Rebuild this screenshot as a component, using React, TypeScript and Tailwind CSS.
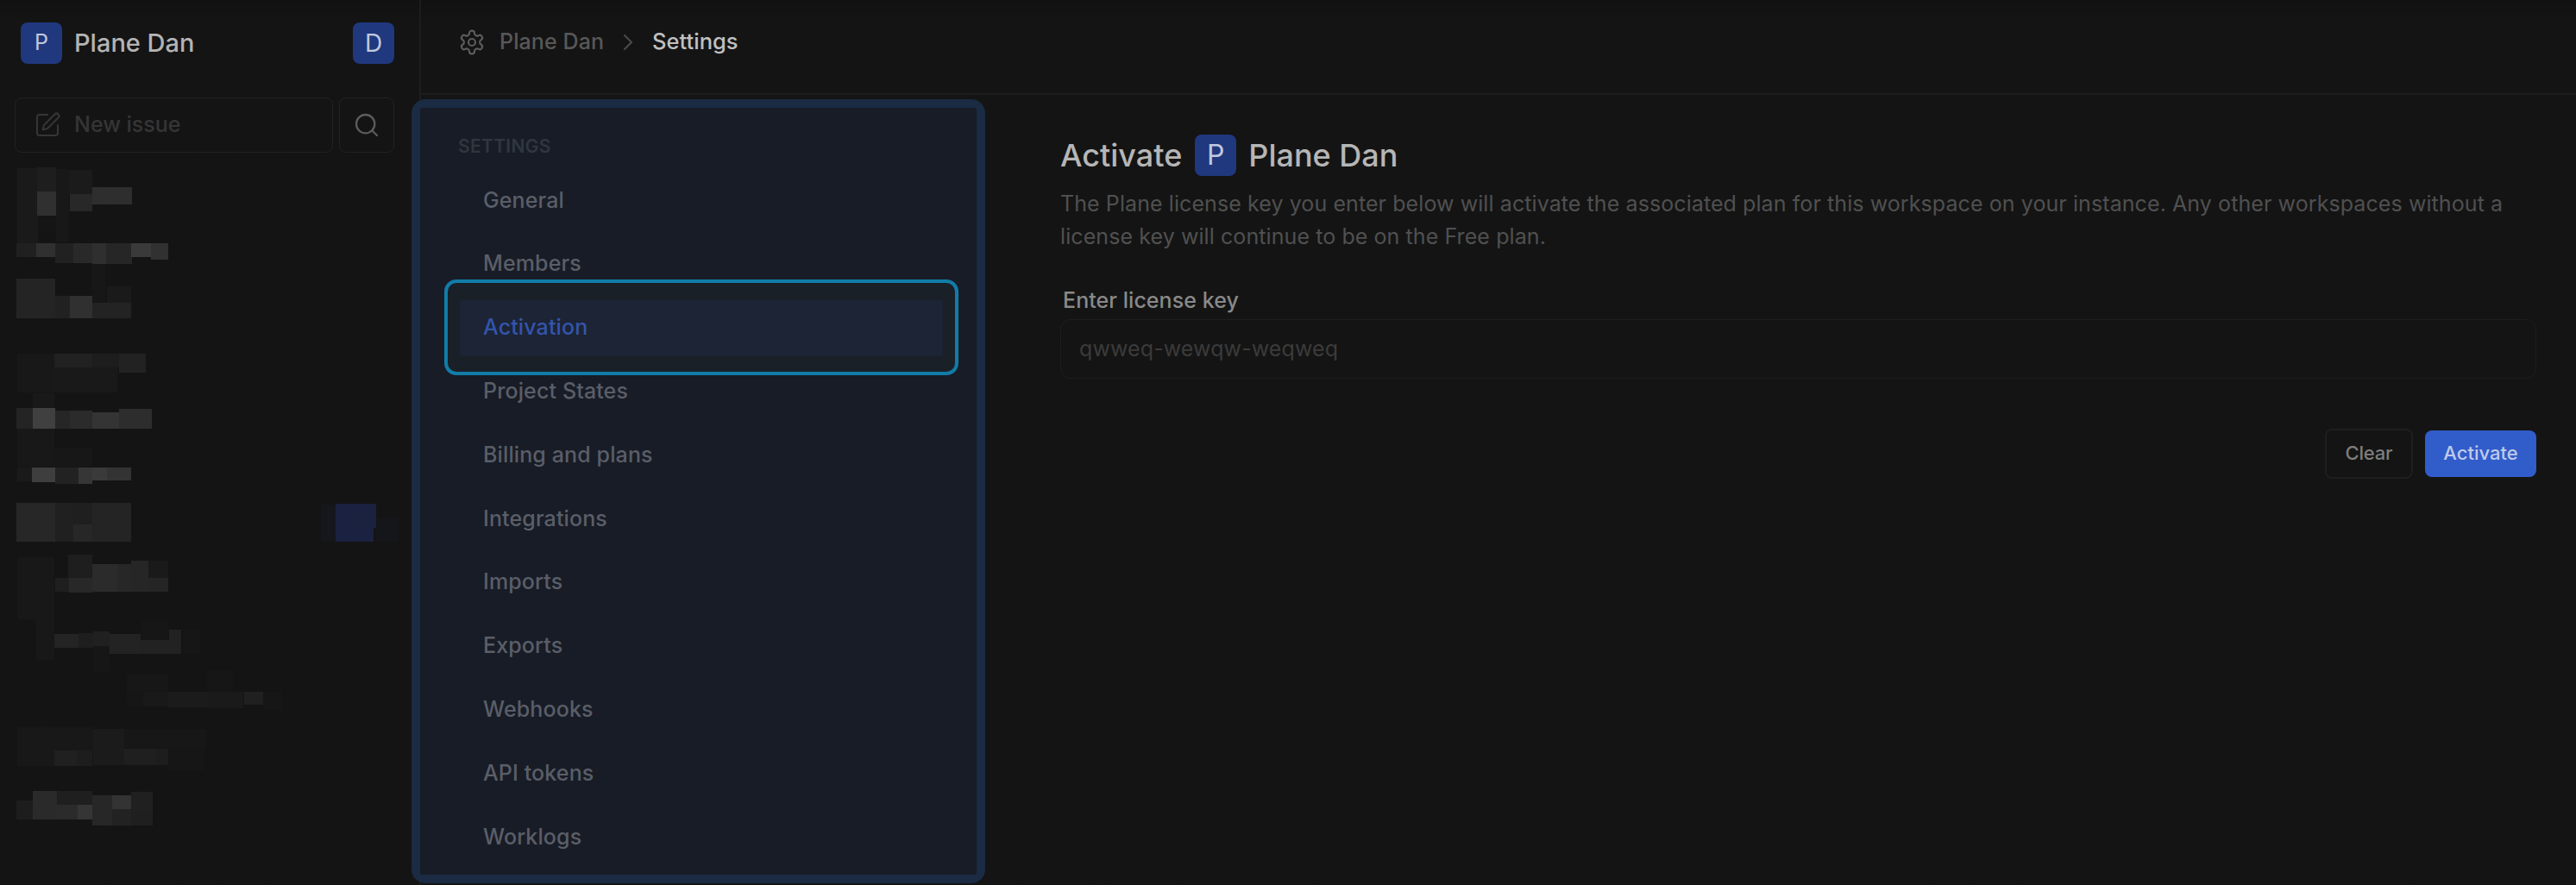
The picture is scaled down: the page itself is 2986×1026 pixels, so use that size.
import { ChevronRight, Search, SquarePen } from "lucide-react";

const navItems = [
  "General",
  "Members",
  "Activation",
  "Project States",
  "Billing and plans",
  "Integrations",
  "Imports",
  "Exports",
  "Webhooks",
  "API tokens",
  "Worklogs",
];

// Redacted sidebar entries: x, y, width, height, fill (y counted from 180px below the page top).
const mosaic: [number, number, number, number, string][] = [
  [20, 15, 24, 87, "#1a1a1a"], [43, 14, 22, 28, "#1e1e1e"], [43, 42, 22, 28, "#303030"], [65, 16, 15, 84, "#181818"],
  [80, 17, 27, 28, "#1b1b1b"], [81, 45, 26, 20, "#282828"], [107, 37, 46, 20, "#2e2e2e"], [44, 70, 20, 18, "#151515"],
  [19, 102, 23, 16, "#202020"], [42, 102, 22, 16, "#303030"], [64, 102, 21, 23, "#212121"], [85, 102, 22, 23, "#292929"],
  [107, 102, 16, 24, "#2f2f2f"], [123, 102, 30, 24, "#262626"], [152, 102, 23, 16, "#3a3a3a"], [175, 102, 20, 19, "#313131"],
  [107, 126, 15, 44, "#171717"],
  [19, 143, 45, 46, "#242424"], [64, 163, 17, 26, "#212121"], [81, 163, 26, 26, "#303030"], [107, 171, 45, 18, "#232323"],
  [124, 152, 28, 19, "#1a1a1a"],
  [20, 230, 43, 45, "#181818"], [63, 230, 44, 16, "#212121"], [107, 230, 31, 16, "#1d1d1d"], [138, 230, 31, 22, "#222222"],
  [63, 246, 73, 29, "#191919"], [38, 276, 25, 17, "#191919"],
  [19, 293, 19, 24, "#242424"], [38, 293, 26, 24, "#404040"], [64, 296, 17, 21, "#262626"], [81, 296, 26, 21, "#2b2b2b"],
  [107, 298, 31, 19, "#343434"], [138, 294, 38, 23, "#2d2d2d"], [20, 317, 43, 44, "#181818"], [63, 339, 44, 22, "#171717"],
  [20, 362, 17, 16, "#1a1a1a"], [37, 362, 27, 17, "#3e3e3e"], [64, 362, 27, 19, "#222222"], [91, 362, 16, 19, "#363636"],
  [107, 362, 17, 15, "#3a3a3a"], [124, 362, 28, 15, "#333333"],
  [19, 403, 45, 45, "#272727"], [64, 403, 21, 45, "#202020"], [85, 403, 22, 25, "#1f1f1f"], [85, 428, 22, 20, "#272727"],
  [107, 403, 45, 45, "#242424"],
  [372, 405, 17, 42, "#15171d"], [389, 404, 47, 28, "#1a2240"], [389, 432, 44, 16, "#1b2140"], [436, 420, 26, 28, "#15161a"],
  [20, 466, 43, 72, "#181818"], [79, 463, 28, 27, "#1e1e1e"], [64, 490, 16, 16, "#1f1f1f"], [80, 490, 27, 17, "#282828"],
  [107, 474, 29, 32, "#2b2b2b"], [136, 474, 16, 32, "#272727"], [152, 470, 20, 36, "#262626"], [172, 470, 23, 20, "#1a1a1a"],
  [172, 490, 23, 16, "#252525"],
  [42, 537, 21, 48, "#181818"], [63, 555, 28, 16, "#242424"], [91, 554, 17, 17, "#1e1e1e"], [108, 552, 19, 17, "#202020"],
  [108, 569, 19, 30, "#161616"], [127, 555, 36, 23, "#232323"], [163, 562, 33, 16, "#222222"], [196, 550, 14, 28, "#222222"],
  [212, 550, 20, 28, "#161616"], [164, 538, 30, 24, "#161616"],
  [147, 602, 48, 20, "#171717"], [147, 622, 19, 17, "#161616"], [166, 622, 29, 17, "#191919"], [195, 622, 45, 18, "#1b1b1b"],
  [240, 622, 42, 19, "#1a1a1a"], [283, 622, 22, 15, "#202020"], [305, 622, 22, 22, "#161616"], [240, 598, 30, 24, "#161616"],
  [20, 663, 43, 45, "#181818"], [63, 663, 45, 27, "#181818"], [108, 665, 36, 42, "#1b1b1b"], [144, 665, 95, 22, "#171717"],
  [63, 690, 26, 18, "#202020"], [89, 690, 18, 18, "#1d1d1d"], [144, 688, 36, 19, "#1f1f1f"], [180, 688, 15, 19, "#1d1d1d"],
  [195, 687, 42, 26, "#161616"],
  [19, 748, 19, 22, "#1d1d1d"], [38, 737, 28, 33, "#2a2a2a"], [66, 737, 41, 16, "#1f1f1f"], [66, 753, 24, 17, "#2b2b2b"],
  [90, 753, 17, 17, "#353535"], [107, 742, 23, 35, "#272727"], [130, 742, 22, 16, "#333333"], [130, 758, 22, 19, "#222222"],
  [152, 738, 25, 22, "#202020"], [152, 760, 25, 17, "#1f1f1f"],
];

function Badge({ letter, className }: { letter: string; className: string }) {
  return (
    <span className={`flex size-12 shrink-0 items-center justify-center rounded-lg bg-[#20387e] text-[#c0c8de] ${className}`}>
      {letter}
    </span>
  );
}

function GearIcon() {
  return (
    <svg className="size-8" viewBox="0 0 24 24" fill="none" stroke="currentColor" strokeWidth="1.6" strokeLinecap="round" strokeLinejoin="round">
      <path d="M12.22 2h-.44a2 2 0 0 0-2 2v.18a2 2 0 0 1-1 1.73l-.43.25a2 2 0 0 1-2 0l-.15-.08a2 2 0 0 0-2.73.73l-.22.38a2 2 0 0 0 .73 2.73l.15.1a2 2 0 0 1 1 1.72v.51a2 2 0 0 1-1 1.74l-.15.09a2 2 0 0 0-.73 2.73l.22.38a2 2 0 0 0 2.73.73l.15-.08a2 2 0 0 1 2 0l.43.25a2 2 0 0 1 1 1.73V20a2 2 0 0 0 2 2h.44a2 2 0 0 0 2-2v-.18a2 2 0 0 1 1-1.73l.43-.25a2 2 0 0 1 2 0l.15.08a2 2 0 0 0 2.73-.73l.22-.39a2 2 0 0 0-.73-2.73l-.15-.08a2 2 0 0 1-1-1.74v-.5a2 2 0 0 1 1-1.74l.15-.09a2 2 0 0 0 .73-2.73l-.22-.38a2 2 0 0 0-2.73-.73l-.15.08a2 2 0 0 1-2 0l-.43-.25a2 2 0 0 1-1-1.73V4a2 2 0 0 0-2-2z" />
      <circle cx="12" cy="12" r="3" />
    </svg>
  );
}

function Sidebar() {
  return (
    <aside className="flex w-[488px] shrink-0 flex-col border-r-2 border-[#1d1d1d]">
      <div className="flex h-[100px] items-center pr-[29px] pl-6">
        <Badge letter="P" className="text-[25px]" />
        <span className="ml-[14px] text-[29px] font-medium text-[#b4b4b4]">Plane Dan</span>
        <Badge letter="D" className="ml-auto text-[28px]" />
      </div>
      <div className="mt-[13px] flex gap-[7px] pl-[17px]">
        <button className="flex h-16 w-[369px] items-center rounded-lg border border-[#222222] pl-[21px] text-[25px] font-medium text-[#353535]">
          <SquarePen className="size-8" strokeWidth={1.6} />
          <span className="ml-[15px]">New issue</span>
        </button>
        <button className="flex size-16 items-center justify-center rounded-lg border border-[#222222] text-[#5c5c5c]">
          <Search className="size-8" strokeWidth={1.7} />
        </button>
      </div>
      <svg className="mt-[3px] h-[846px] w-[477px]" viewBox="0 0 477 846" shapeRendering="crispEdges">
        {mosaic.map(([x, y, w, h, fill], i) => (
          <rect key={i} x={x} y={y} width={w} height={h} fill={fill} />
        ))}
      </svg>
    </aside>
  );
}

function SettingsNav() {
  return (
    <nav className="z-10 -ml-[11px] mt-[5px] h-[909px] w-[665px] shrink-0 rounded-2xl bg-[#1a2b43] p-[10px]">
      <div className="h-full rounded-[3px] bg-[#181c26] pt-[30px] pl-[44px]">
        <h2 className="text-[21px] leading-[30px] font-semibold tracking-[0.3px] text-[#303640]">SETTINGS</h2>
        <ul className="-ml-[14px] flex flex-col pt-[10.5px]">
          {navItems.map((item) => (
            <li key={item} className="relative flex h-[73.8px] items-center pl-[43px] text-[25px] font-medium tracking-[0.12px]">
              {item === "Activation" && (
                <span className="absolute top-[-19px] left-[-2px] h-[111px] w-[596px] rounded-[14px] border-4 border-[#117ca8] bg-[#1a2028] p-[14px] pt-[20px] pb-[18px]">
                  <span className="block h-full rounded bg-[#1c2435]" />
                </span>
              )}
              <span className={item === "Activation" ? "relative text-[#3454ac]" : "text-[#5a5e68]"}>{item}</span>
            </li>
          ))}
        </ul>
      </div>
    </nav>
  );
}

function ActivationForm() {
  return (
    <section className="ml-[87px] flex w-[1711px] flex-col pt-[46px]">
      <h1 className="flex h-12 items-center text-[36px] font-medium text-[#b6b6b6]">
        Activate
        <Badge letter="P" className="mr-[14px] ml-[15px] pb-px text-[32px] font-normal" />
        Plane Dan
      </h1>
      <p className="mt-[13px] text-[25px] leading-[38px] tracking-[0.085px] text-[#505050]">
        The Plane license key you enter below will activate the associated plan for this workspace on your instance. Any other workspaces without a license key will continue to be on the Free plan.
      </p>
      <label className="mt-[39px] ml-[3px] text-[25px] leading-[32px] font-medium tracking-[0.05px] text-[#898989]">
        Enter license key
      </label>
      <input
        className="mt-[6px] h-[69px] w-full rounded-xl border border-[#1e1e1e] bg-transparent px-[21px] pb-0.5 text-[25px] tracking-[0.1px] placeholder:text-[#3b3b3b]"
        placeholder="qwweq-wewqw-weqweq"
      />
      <div className="mt-[58px] flex items-center justify-end gap-[14px] text-[22px] font-medium">
        <button className="h-[58px] w-[102px] rounded-lg border-2 border-[#1e1e1e] pb-0.5 text-[#7e7e7e] tracking-[-0.2px]">Clear</button>
        <button className="h-[54px] w-[129px] rounded-lg bg-[#315dca] pb-0.5 text-[#bfcaea]">Activate</button>
      </div>
    </section>
  );
}

export default function App() {
  return (
    <div className="flex h-[1026px] w-[2986px] overflow-hidden bg-[#141414] bg-linear-to-b from-[#111111] to-[#141414] to-[24px] font-['Inter',sans-serif]">
      <Sidebar />
      <main className="flex flex-1 flex-col">
        <header className="flex h-[110px] shrink-0 items-center border-b-2 border-[#1d1d1d] pb-[11px] pl-[43px] text-[25px] font-medium">
          <span className="flex text-[#5c5c5c]">
            <GearIcon />
          </span>
          <span className="ml-[16px] tracking-[0.1px] text-[#585858]">Plane Dan</span>
          <ChevronRight className="ml-[12px] size-8 text-[#4a4a4a]" strokeWidth={1.6} />
          <span className="ml-[12px] text-[25.5px] text-[#c0c0c0]">Settings</span>
        </header>
        <div className="flex flex-1">
          <SettingsNav />
          <ActivationForm />
        </div>
      </main>
    </div>
  );
}
